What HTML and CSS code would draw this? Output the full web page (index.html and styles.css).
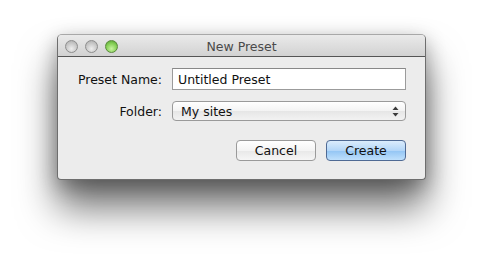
FILE: index.html
```html
<!DOCTYPE html>
<html>
<head>
<meta charset="utf-8">
<link rel="stylesheet" href="styles.css">
</head>
<body>
<div class="window">
  <div class="titlebar">
    <div class="lights">
      <span class="light"></span>
      <span class="light"></span>
      <span class="light green"></span>
    </div>
    <div class="title">New Preset</div>
  </div>
  <div class="content">
    <div class="form">
      <label class="label">Preset Name:</label>
      <div class="field">Untitled Preset</div>
      <label class="label">Folder:</label>
      <div class="select">
        <span>My sites</span>
        <svg class="arrows" width="7" height="11" viewBox="0 0 7 11"><path d="M3.5 0.5 L6.5 4 L0.5 4 Z" fill="#3a3a3a"/><path d="M3.5 10.5 L6.5 7 L0.5 7 Z" fill="#3a3a3a"/></svg>
      </div>
    </div>
    <div class="buttons">
      <button class="btn">Cancel</button>
      <button class="btn primary">Create</button>
    </div>
  </div>
</div>
</body>
</html>
```
FILE: styles.css
```css
html, body {
  margin: 0;
  padding: 0;
  background: #ffffff;
}
html {
  height: 258px;
}
body {
  box-sizing: border-box;
  min-height: 258px;
  padding: 34px 0 0 57px;
  font-family: "DejaVu Sans", "Liberation Sans", sans-serif;
  font-size: 12px;
  color: #1a1a1a;
}
.window {
  width: 367px;
  border: 1px solid #6e6e6e;
  border-top-color: #a8a8a8;
  border-radius: 5px 5px 4px 4px;
  background: #ececec;
  box-shadow: 0 28px 38px rgba(0,0,0,0.55), 0 6px 20px rgba(0,0,0,0.3);
  overflow: hidden;
}
.titlebar {
  height: 21px;
  position: relative;
  display: flex;
  align-items: center;
  justify-content: center;
  background: linear-gradient(#eaeaea, #d2d2d2);
  border-bottom: 1px solid #555555;
}
.lights {
  position: absolute;
  left: 7px;
  top: 5px;
  display: flex;
  gap: 7px;
}
.light {
  width: 11px;
  height: 11px;
  border-radius: 50%;
  border: 1px solid #8e8e8e;
  background: radial-gradient(circle at 50% 70%, #eeeeee 0%, #c9c9c9 55%, #a9a9a9 100%);
}
.light.green {
  border-color: #5a8a3c;
  background: radial-gradient(circle at 50% 70%, #c8f3a0 0%, #86d056 55%, #4f9a2c 100%);
}
.title {
  font-size: 12.5px;
  color: #4a4a4a;
  padding-top: 1px;
}
.content {
  padding: 11px 19px 18px 0;
}
.form {
  display: grid;
  grid-template-columns: 104px 234px;
  column-gap: 10px;
  row-gap: 11px;
  align-items: center;
}
.label {
  text-align: right;
  font-size: 12.5px;
  color: #111;
}
.field {
  box-sizing: border-box;
  height: 22px;
  border: 1px solid #9b9b9b;
  border-top-color: #888;
  background: #ffffff;
  padding: 0 0 0 5px;
  display: flex;
  align-items: center;
  font-size: 12.5px;
  color: #111;
}
.select {
  box-sizing: border-box;
  height: 20px;
  border: 1px solid #9a9a9a;
  border-radius: 4px;
  background: linear-gradient(#ffffff, #f3f3f3 50%, #e6e6e6 52%, #f2f2f2);
  display: flex;
  align-items: center;
  justify-content: space-between;
  padding: 0 6px 0 8px;
  font-size: 12.5px;
  color: #111;
}
.arrows {
  display: block;
}
.buttons {
  display: flex;
  justify-content: flex-end;
  gap: 10px;
  margin-top: 19px;
}
.btn {
  box-sizing: border-box;
  width: 80px;
  height: 21px;
  border: 1px solid #9a9a9a;
  border-radius: 4px;
  background: linear-gradient(#ffffff, #f4f4f4 50%, #e8e8e8 52%, #f6f6f6);
  font-family: "DejaVu Sans", "Liberation Sans", sans-serif;
  font-size: 12.5px;
  color: #111;
  padding: 0;
  margin: 0;
}
.btn.primary {
  border-color: #4f6a94;
  background: linear-gradient(#dbecfc, #b3d6f8 50%, #93c5f4 52%, #bfe0fc);
}
```
